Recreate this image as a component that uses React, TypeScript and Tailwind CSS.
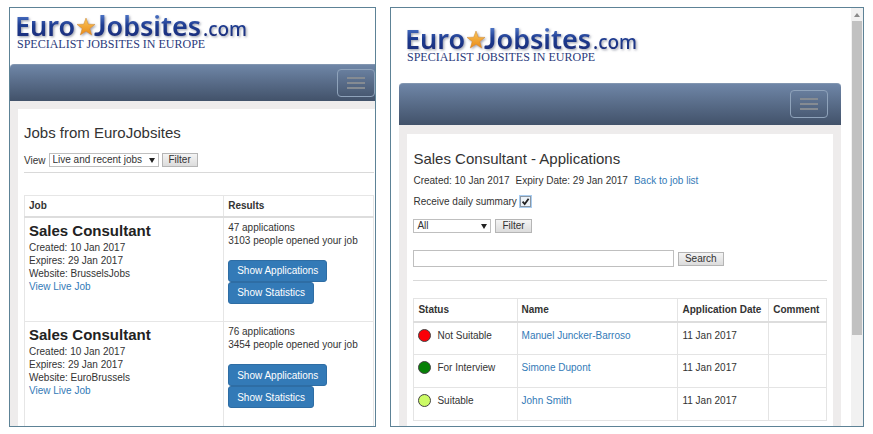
import React from "react";

const jobs = [
  {
    id: 1,
    title: "Sales Consultant",
    created: "10 Jan 2017",
    expires: "29 Jan 2017",
    website: "BrusselsJobs",
    applications: 47,
    opened: 3103,
  },
  {
    id: 2,
    title: "Sales Consultant",
    created: "10 Jan 2017",
    expires: "29 Jan 2017",
    website: "EuroBrussels",
    applications: 76,
    opened: 3454,
  },
];

const applications = [
  {
    id: 1,
    status: "Not Suitable",
    color: "bg-[#fb0007]",
    name: "Manuel Juncker-Barroso",
    date: "11 Jan 2017",
  },
  {
    id: 2,
    status: "For Interview",
    color: "bg-[#068006]",
    name: "Simone Dupont",
    date: "11 Jan 2017",
  },
  {
    id: 3,
    status: "Suitable",
    color: "bg-[#ccfb66]",
    name: "John Smith",
    date: "11 Jan 2017",
  },
];

const Logo = ({ id }: { id: string }) => {
  return (
    <svg
      width="240"
      height="46"
      viewBox="0 0 240 46"
      role="img"
      aria-label="EuroJobsites.com"
      className="block shrink-0"
    >
      <defs>
        <linearGradient
          id={`${id}-blue`}
          gradientUnits="userSpaceOnUse"
          x1="0"
          y1="7"
          x2="0"
          y2="29"
        >
          <stop offset="0" stopColor="#4a72c4" />
          <stop offset="0.45" stopColor="#1f3d92" />
          <stop offset="1" stopColor="#1c2f7c" />
        </linearGradient>
        <linearGradient id={`${id}-gold`} x1="0" y1="0" x2="0" y2="1">
          <stop offset="0" stopColor="#fbc65a" />
          <stop offset="1" stopColor="#e88a17" />
        </linearGradient>
        <filter id={`${id}-shadow`} x="-5%" y="-10%" width="112%" height="130%">
          <feDropShadow
            dx="1.2"
            dy="1.2"
            stdDeviation="0.8"
            floodColor="#5a6378"
            floodOpacity="0.6"
          />
        </filter>
      </defs>
      <g
        filter={`url(#${id}-shadow)`}
        fill={`url(#${id}-blue)`}
        fontFamily="'Noto Sans', 'Open Sans', sans-serif"
        fontWeight="600"
      >
        <text x="0" y="28" fontSize="27">
          Euro
        </text>
        <text x="79" y="28" fontSize="27">
          <tspan fontFamily="Lato, sans-serif" fontSize="29" fontWeight="700">
            J
          </tspan>
          obsites
        </text>
        <text x="188" y="28" fontSize="19" fontWeight="500">
          .com
        </text>
        <path
          d="M71 10 L73.3 16.2 L80 16.4 L74.8 20.5 L76.7 27 L71 23.3 L65.3 27 L67.2 20.5 L62 16.4 L68.7 16.2 Z"
          fill={`url(#${id}-gold)`}
          stroke="#c9862d"
          strokeWidth="0.5"
        />
      </g>
      <text
        x="2"
        y="40"
        fontSize="12"
        fill="#2a3a7c"
        fontFamily="'Liberation Serif', serif"
      >
        SPECIALIST JOBSITES IN EUROPE
      </text>
    </svg>
  );
};

const MenuButton = () => {
  return (
    <button
      type="button"
      aria-label="Menu"
      className="flex h-7 w-[38px] flex-col items-center justify-center gap-[3px] rounded border border-[#8fa3bb]"
    >
      <span className="h-[2px] w-[18px] bg-[#858b92]" />
      <span className="h-[2px] w-[18px] bg-[#858b92]" />
      <span className="h-[2px] w-[18px] bg-[#858b92]" />
    </button>
  );
};

const Select = ({
  label,
  option,
  width,
}: {
  label: string;
  option: string;
  width: string;
}) => {
  return (
    <span className={`relative inline-flex ${width}`}>
      <select
        aria-label={label}
        className="h-[14px] w-full appearance-none border border-[#bfbfbf] bg-white pl-[3px] text-[10px] leading-3"
      >
        <option>{option}</option>
      </select>
      <svg
        width="6"
        height="5"
        viewBox="0 0 6 5"
        className="pointer-events-none absolute right-1 top-[5px]"
      >
        <path d="M0 0 H6 L3 5 Z" fill="#222" />
      </svg>
    </span>
  );
};

const GreyButton = ({ children }: { children: React.ReactNode }) => {
  return (
    <button
      type="button"
      className="h-[14px] border border-[#b5b5b5] bg-linear-to-b from-[#f4f4f4] to-[#dcdcdc] px-[6px] text-[10px] leading-3"
    >
      {children}
    </button>
  );
};

const BlueButton = ({ children }: { children: React.ReactNode }) => {
  return (
    <button
      type="button"
      className="h-[22px] rounded-[3px] border border-[#2e6da4] bg-[#337ab7] px-2 text-[10px] text-white"
    >
      {children}
    </button>
  );
};

const JobsPanel = () => {
  return (
    <section className="flex flex-col overflow-hidden border border-[#5d8296] bg-white">
      <header className="h-14 shrink-0 px-[5px]">
        <Logo id="jobs" />
      </header>
      <nav className="flex shrink-0 items-center justify-end rounded-tl border-t border-[#8296b0] bg-linear-to-b from-[#6f86a7] to-[#42526a] py-1">
        <MenuButton />
      </nav>
      <div className="grow bg-[#eeecec] pl-2 pt-2">
        <div className="h-full bg-white pl-[6px] pr-px pt-3">
          <h1 className="text-[15px] leading-6">Jobs from EuroJobsites</h1>
          <div className="mt-2 flex items-center gap-[3px] border-b border-[#d9d9d9] pb-[5px]">
            <span>View</span>
            <Select
              label="View"
              option="Live and recent jobs"
              width="w-[110px]"
            />
            <GreyButton>Filter</GreyButton>
          </div>
          <table className="mt-[22px] w-full table-fixed border-collapse border border-[#e6e6e6]">
            <thead>
              <tr className="border-b-2 border-[#dddddd] text-left">
                <th className="h-[21px] w-[57%] border-r border-[#e6e6e6] px-1">
                  Job
                </th>
                <th className="px-1">Results</th>
              </tr>
            </thead>
            <tbody>
              {jobs.map((job) => (
                <tr
                  key={job.id}
                  className="h-[105px] border-b border-[#e6e6e6] align-top"
                >
                  <td className="border-r border-[#e6e6e6] px-1 pt-[3px]">
                    <h2 className="text-[15px] font-bold leading-5 text-[#222222]">
                      {job.title}
                    </h2>
                    <p>Created: {job.created}</p>
                    <p>Expires: {job.expires}</p>
                    <p>Website: {job.website}</p>
                    <a href="#live" className="text-[#337ab7]">
                      View Live Job
                    </a>
                  </td>
                  <td className="px-1 pt-[3px]">
                    <p>{job.applications} applications</p>
                    <p>{job.opened} people opened your job</p>
                    <div className="mt-[13px] flex flex-col items-start">
                      <BlueButton>Show Applications</BlueButton>
                      <BlueButton>Show Statistics</BlueButton>
                    </div>
                  </td>
                </tr>
              ))}
            </tbody>
          </table>
        </div>
      </div>
    </section>
  );
};

const ApplicationsPanel = () => {
  return (
    <section className="flex overflow-hidden border border-[#5d8296] bg-white">
      <div className="flex grow flex-col pl-2 pr-[10px]">
        <header className="h-[75px] shrink-0 px-[6px] pt-[13px]">
          <Logo id="applications" />
        </header>
        <nav className="flex shrink-0 items-center justify-end rounded-t border-t border-[#8296b0] bg-linear-to-b from-[#6f86a7] to-[#42526a] pb-[7px] pr-[13px] pt-[6px]">
          <MenuButton />
        </nav>
        <div className="grow bg-[#eeecec] px-2 pt-[9px]">
          <div className="h-full bg-white px-[6px] pt-[13px]">
            <h1 className="text-[15px] leading-6">
              Sales Consultant - Applications
            </h1>
            <p className="mt-[3px] flex gap-[6px]">
              <span>Created: 10 Jan 2017</span>
              <span>Expiry Date: 29 Jan 2017</span>
              <a href="#jobs" className="text-[#337ab7]">
                Back to job list
              </a>
            </p>
            <label className="mt-2 flex items-center gap-[3px]">
              Receive daily summary
              <span className="relative inline-flex">
                <input
                  type="checkbox"
                  defaultChecked
                  className="size-[11px] appearance-none border border-[#8a97a5] bg-[#eef3f8] outline-1 outline-[#a9cdf0]"
                />
                <svg
                  width="11"
                  height="11"
                  viewBox="0 0 11 11"
                  className="pointer-events-none absolute left-0 top-0"
                >
                  <path
                    d="M2.6 5.6 L4.7 8 L8.6 2.8"
                    fill="none"
                    stroke="#222"
                    strokeWidth="1.8"
                  />
                </svg>
              </span>
            </label>
            <div className="mt-[11px] flex items-center gap-1">
              <Select label="Status" option="All" width="w-[78px]" />
              <GreyButton>Filter</GreyButton>
            </div>
            <div className="mt-[17px] flex items-center gap-1 border-b border-[#d9d9d9] pb-[13px]">
              <input
                type="text"
                aria-label="Search applications"
                className="h-[17px] w-[63%] border border-[#bfbfbf] px-1"
              />
              <GreyButton>Search</GreyButton>
            </div>
            <table className="mt-[17px] w-full table-fixed border-collapse border border-[#e4e4e4]">
              <thead>
                <tr className="border-b-2 border-[#dddddd] text-left">
                  <th className="h-[23px] w-[25%] border-r border-[#e4e4e4] px-1">
                    Status
                  </th>
                  <th className="w-[39%] border-r border-[#e4e4e4] px-1">
                    Name
                  </th>
                  <th className="w-[22%] whitespace-nowrap border-r border-[#e4e4e4] px-1">
                    Application Date
                  </th>
                  <th className="px-1">Comment</th>
                </tr>
              </thead>
              <tbody>
                {applications.map((item) => (
                  <tr
                    key={item.id}
                    className="h-[33px] border-b border-[#e4e4e4] align-top"
                  >
                    <td className="border-r border-[#e4e4e4] px-1 pt-[6px]">
                      <div className="flex gap-[6px]">
                        <span
                          className={`size-[13px] rounded-full border border-[#444444] ${item.color}`}
                        />
                        {item.status}
                      </div>
                    </td>
                    <td className="border-r border-[#e4e4e4] px-1 pt-[6px]">
                      <a href="#applicant" className="text-[#337ab7]">
                        {item.name}
                      </a>
                    </td>
                    <td className="border-r border-[#e4e4e4] px-1 pt-[6px]">
                      {item.date}
                    </td>
                    <td />
                  </tr>
                ))}
              </tbody>
            </table>
          </div>
        </div>
      </div>
      <div className="flex w-3 shrink-0 flex-col bg-[#f1f1f1] px-px">
        <div className="flex h-[13px] items-center justify-center">
          <svg width="6" height="4" viewBox="0 0 6 4">
            <path d="M3 0 L6 4 H0 Z" fill="#8a8a8a" />
          </svg>
        </div>
        <div className="h-3/4 bg-[#c1c1c1]" />
      </div>
    </section>
  );
};

const App = () => {
  return (
    <main className="grid h-screen grid-cols-[367fr_473fr] gap-[14px] bg-white px-[9px] py-[7px] font-['Liberation_Sans',Arial,sans-serif] text-[10px] leading-[13px] text-[#333333]">
      <JobsPanel />
      <ApplicationsPanel />
    </main>
  );
};

export default App;
